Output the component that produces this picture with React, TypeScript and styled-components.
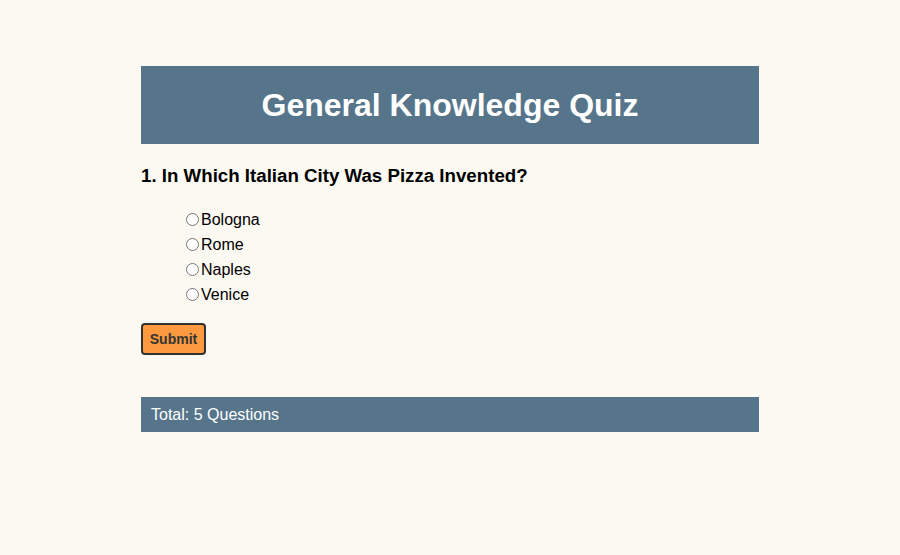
import React, { useState } from 'react';
import styled, { createGlobalStyle } from 'styled-components';

const GlobalStyle = createGlobalStyle`
  body {
    margin: 0;
    background: #fcf9f2;
    font-family: 'Liberation Sans', Arial, sans-serif;
    color: #000;
  }
`;

const options = ['Bologna', 'Rome', 'Naples', 'Venice'];

const App = () => {
  const [answer, setAnswer] = useState<string | null>(null);

  return (
    <>
      <GlobalStyle />
      <QuizContainer>
        <QuizHeader>
          <QuizTitle>General Knowledge Quiz</QuizTitle>
        </QuizHeader>
        <QuestionTitle>1. In Which Italian City Was Pizza Invented?</QuestionTitle>
        <OptionList>
          {options.map((opt) => (
            <OptionItem key={opt}>
              <label>
                <RadioInput
                  type='radio'
                  name='q1'
                  value={opt}
                  checked={answer === opt}
                  onChange={() => setAnswer(opt)}
                />
                {opt}
              </label>
            </OptionItem>
          ))}
        </OptionList>
        <SubmitButton type='button'>Submit</SubmitButton>
        <QuizFooter>Total: 5 Questions</QuizFooter>
      </QuizContainer>
    </>
  );
};

export default App;

const QuizContainer = styled.div`
  width: 618px;
  margin: 66px auto 0;
  display: flex;
  flex-direction: column;
  align-items: flex-start;
`;

const QuizHeader = styled.header`
  align-self: stretch;
  height: 78px;
  background: #56758a;
  display: flex;
  align-items: center;
  justify-content: center;
`;

const QuizTitle = styled.h1`
  margin: 0;
  color: #fff;
  font-size: 32px;
  font-weight: 700;
`;

const QuestionTitle = styled.h2`
  margin: 21px 0 0;
  font-size: 18.7px;
  font-weight: 700;
  line-height: 21px;
`;

const OptionList = styled.ul`
  list-style: none;
  margin: 21px 0 0;
  padding: 0 0 0 40px;
`;

const OptionItem = styled.li`
  font-size: 16px;
  line-height: 25px;
  label {
    display: flex;
    align-items: center;
  }
`;

const RadioInput = styled.input`
  width: 13px;
  height: 13px;
  margin: 0 2px 0 5px;
`;

const SubmitButton = styled.button`
  margin-top: 16px;
  width: 65px;
  height: 32px;
  background: #fd9a40;
  border: 2px solid #333;
  border-radius: 4px;
  color: #333;
  font-family: 'Liberation Sans', Arial, sans-serif;
  font-size: 14px;
  font-weight: 700;
  padding: 0;
  cursor: pointer;
`;

const QuizFooter = styled.footer`
  align-self: stretch;
  margin-top: 42px;
  height: 35px;
  background: #56758a;
  color: #fff;
  font-size: 16px;
  padding: 0 10px;
  display: flex;
  align-items: center;
`;
